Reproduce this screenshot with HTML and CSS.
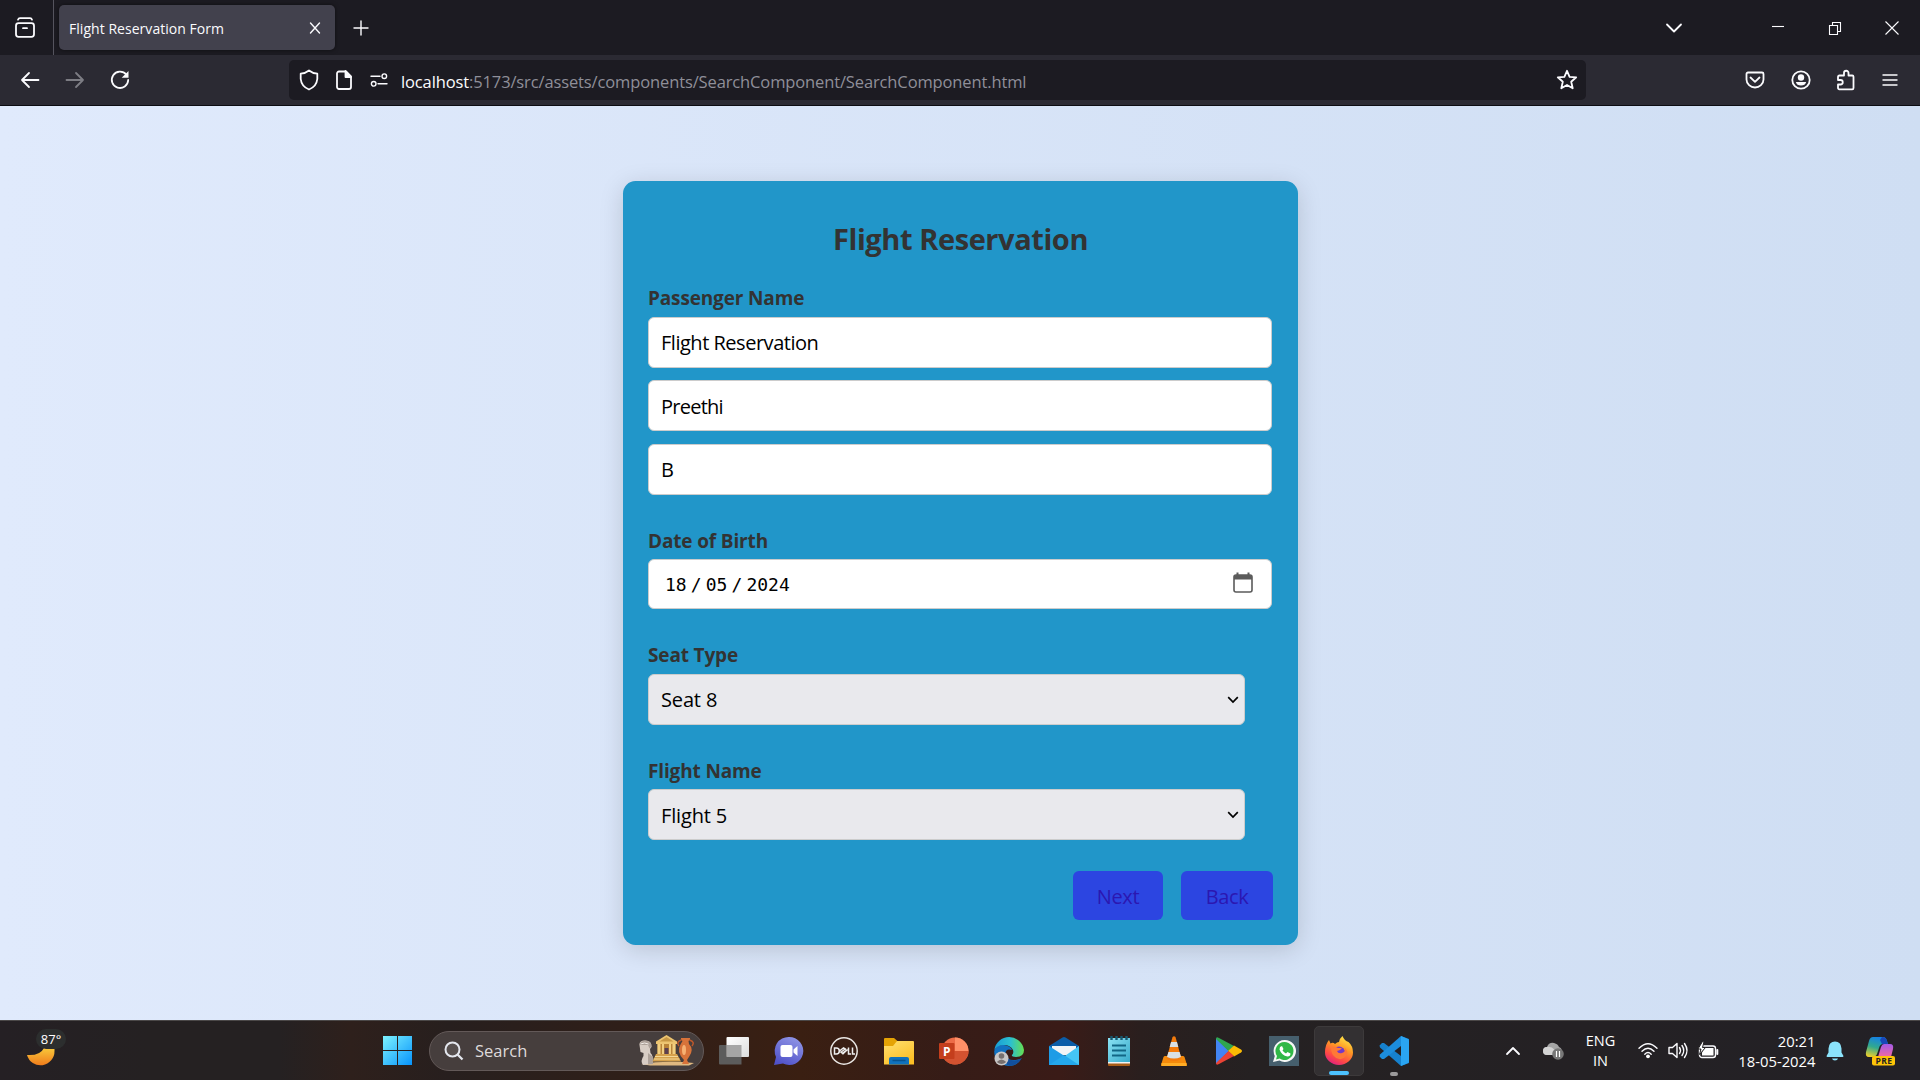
FILE: index.html
```html
<!DOCTYPE html>
<html lang="en">
<head>
<meta charset="utf-8">
<title>Flight Reservation Form</title>
<link rel="stylesheet" href="styles.css">
</head>
<body>
<header class="tabbar">
  <div class="tab-view"><svg width="22" height="22" viewBox="0 0 22 22" class="line"><rect x="2" y="6.200" width="18" height="13.600" rx="2.500"/><path d="M4 2.700Q4.500 1.200 6 1.200H16Q17.500 1.200 18 2.700M9 11.200h4"/></svg></div>
  <div class="tab"><span class="tab-title">Flight Reservation Form</span><svg width="12" height="12" viewBox="0 0 12 12" class="line thin"><path d="M1.500 1l9 10M10.500 1l-9 10"/></svg></div>
  <svg class="line thin plus" width="16" height="16" viewBox="0 0 16 16"><path d="M8 1v14M1 8h14"/></svg>
  <div class="window-controls">
    <svg class="line" width="18" height="12" viewBox="0 0 18 12"><path d="M2 2.500l7 7 7-7"/></svg>
    <svg class="line hair minimise" width="14" height="14" viewBox="0 0 14 14"><path d="M1 5.500h12"/></svg>
    <svg class="line hair restore" width="14" height="14" viewBox="0 0 14 14"><path d="M1.500 4.500h8v9h-8zM4.500 4.500v-3h8v9h-3"/></svg>
    <svg class="line hair close" width="14" height="14" viewBox="0 0 14 14"><path d="M.5 .5l13 13M13.500 .5l-13 13"/></svg>
  </div>
</header>
<nav class="toolbar">
  <div class="history">
    <svg class="line" width="20" height="18" viewBox="0 0 20 18"><path d="M18.500 9H2M9 2L2 9l7 7"/></svg>
    <svg class="line dim" width="20" height="18" viewBox="0 0 20 18"><path d="M1.500 9H18M11 2l7 7-7 7"/></svg>
    <svg class="line" width="20" height="20" viewBox="0 0 20 20"><path d="M16.300 4.500A8.200 8.200 0 1 0 18.200 10"/><path d="M18.500 1v6.800h-6.800z" fill="#fbfbfe" stroke="none"/></svg>
  </div>
  <div class="address">
    <svg class="line" width="20" height="22" viewBox="0 0 20 22"><path d="M10 1.500Q13.500 4.300 18.300 4.700V10Q17.500 17.500 10 20.500 2.500 17.500 1.700 10V4.700Q6.500 4.300 10 1.500z"/></svg>
    <svg class="line page" width="16" height="20" viewBox="0 0 16 20"><path d="M3 1.500h7l5 5v10.500a2 2 0 0 1-2 2H3a2 2 0 0 1-2-2V3.500a2 2 0 0 1 2-2z"/><path d="M9.500 1v6H15z" fill="#fbfbfe"/></svg>
    <svg class="line thin" width="18" height="14" viewBox="0 0 18 14"><path d="M1 3.200h9M8 10.800h9"/><circle cx="14.300" cy="3.200" r="2.300"/><circle cx="3.700" cy="10.800" r="2.300"/></svg>
    <span class="url"><b>localhost</b>:5173/src/assets/components/SearchComponent/SearchComponent.html</span>
    <svg class="line star" width="22" height="22" viewBox="0 0 22 22"><path d="M11 1.800l2.600 6 6.600.5-5 4.400 1.500 6.600L11 15.900l-5.700 3.400 1.500-6.600-5-4.400 6.600-.5z"/></svg>
  </div>
  <div class="actions">
    <svg class="line" width="20" height="18" viewBox="0 0 20 18"><path d="M3 1.500h14a1.500 1.500 0 0 1 1.500 1.500v5.500c0 4.500-4 8-8.500 8s-8.500-3.500-8.500-8V3A1.500 1.500 0 0 1 3 1.500zM5.500 6.500L10 10.800l4.500-4.300"/></svg>
    <svg class="line" width="20" height="20" viewBox="0 0 20 20"><circle cx="10" cy="10" r="8.700"/><circle cx="10" cy="7.500" r="3.200" fill="#fbfbfe" stroke="none"/><path d="M4.800 12h10.400Q14.200 15.500 10 15.500T4.800 12z" fill="#fbfbfe" stroke="none"/></svg>
    <svg class="line" width="20" height="22" viewBox="0 0 20 22"><path d="M3.500 6.500H8V4a2 2 0 0 1 4.500 0V6.500h3.700a1.300 1.300 0 0 1 1.300 1.300V19a1.300 1.300 0 0 1-1.300 1.300H3.300A1.300 1.300 0 0 1 2 19V15.500H4.500a2.200 2.200 0 0 0 0-4.500H2V8Q2 6.500 3.500 6.500z"/></svg>
    <svg class="line thin" width="16" height="14" viewBox="0 0 16 14"><path d="M1 2h14M1 7h14M1 12h14"/></svg>
  </div>
</nav>
<main class="page-area">
  <form class="card">
    <h2 class="title">Flight Reservation</h2>
    <label class="label">Passenger Name</label>
    <div class="field"><span class="value">Flight Reservation</span></div>
    <div class="field second"><span class="value tight">Preethi</span></div>
    <div class="field third"><span class="value">B</span></div>
    <label class="label">Date of Birth</label>
    <div class="field date"><span class="date-text"><i>18</i><s>/</s><i>05</i><s>/</s><i>2024</i></span>
      <svg class="calendar" width="20" height="21" viewBox="0 0 20 21"><path d="M3 3h14a2 2 0 0 1 2 2v13a2 2 0 0 1-2 2H3a2 2 0 0 1-2-2V5a2 2 0 0 1 2-2z" fill="none" stroke="#5b5b5b" stroke-width="1.600"/><path d="M1 7V5a2 2 0 0 1 2-2h.5V.5h2V3h9V.5h2V3h.5a2 2 0 0 1 2 2v2.500H1z" fill="#5b5b5b"/></svg></div>
    <label class="label">Seat Type</label>
    <div class="field select"><span>Seat 8</span><svg width="12" height="8" viewBox="0 0 12 8"><path d="M1.200 1.200L6 6l4.800-4.800"/></svg></div>
    <label class="label">Flight Name</label>
    <div class="field select flight"><span>Flight 5</span><svg width="12" height="8" viewBox="0 0 12 8"><path d="M1.200 1.200L6 6l4.800-4.800"/></svg></div>
    <div class="buttons"><div class="btn next">Next</div><div class="btn back">Back</div></div>
  </form>
</main>
<footer class="taskbar">
  <div class="weather">
    <svg width="28" height="20" viewBox="0 0 28 20"><defs><linearGradient id="moon" x2="0" y2="1"><stop stop-color="#f8c83a"/><stop offset="1" stop-color="#f07c1c"/></linearGradient></defs><path d="M0 7Q13 8 17 0H27.500V3A14 14 0 0 1 0 7z" fill="url(#moon)"/></svg>
    <span class="temp">87°</span>
  </div>
  <svg class="start" width="29" height="29" viewBox="0 0 29 29"><defs><linearGradient id="win" x2="1" y2="1"><stop stop-color="#7df3ff"/><stop offset="1" stop-color="#0793fb"/></linearGradient></defs><path d="M0 0h14v14H0zM15 0h14v14H15zM0 15h14v14H0zM15 15h14v14H15z" fill="url(#win)"/></svg>
  <div class="search">
    <svg class="lens" width="20" height="20" viewBox="0 0 20 20"><circle cx="8.500" cy="8.500" r="7" fill="#ffffff18" stroke="#e4e7ee" stroke-width="2"/><path d="M13.500 13.500l5 5" stroke="#e4e7ee" stroke-width="2.300"/></svg>
    <span class="search-text">Search</span>
    <svg class="museum" width="56" height="31" viewBox="0 0 56 31"><path d="M3 29q25-4 53-1l-5 2.500H12z" fill="#e0b981"/><path d="M1.500 10Q1 5.500 7 5.500q7 0 6.500 6.500l-1.500 2 .5 4q3 2 2.500 11l-10 1q-3-4 .5-9v-3l-3-1z" fill="#d8cdc5"/><path d="M1.500 10q1-4.500 6-4.500 6 0 6 6l-2 2-1.500-3.500zM10 18l5 4v7l-5 .5z" fill="#aea29a"/><path d="M2.500 9q4-2 8 0" fill="none" stroke="#f1ebe6"/><path d="M18 6.500L28.500 0 39 6.500V9H18z" fill="#ecc471"/><path d="M21.500 6.500l7-4.500 7 4.500z" fill="#c79745"/><path d="M19.500 9h18v10h-18z" fill="#b98339"/><path d="M19.500 9h3v10h-3zM24 9h2v10h-2zM31 9h2v10h-2zM34.500 9h3v10h-3z" fill="#f1cf80"/><path d="M26.500 13h4v6h-4z" fill="#5b4050"/><path d="M18 19h21l4 7.500H14.500z" fill="#d5a14c"/><path d="M17 21.500h23M15.500 24h26" stroke="#f3d896"/><path d="M43 3h9v1.500L50.500 6 51 9q5 5 .5 12l-2.500 4 2 4h-7l2-4q-8-8-3.500-15.500L44.500 6 43 4.500z" fill="#d8733a"/><path d="M43.500 5q-6 2-2.500 6M51.500 5q6 2 2.500 6" fill="none" stroke="#c0592b" stroke-width="1.500"/><ellipse cx="46" cy="15" rx="2" ry="5" fill="#f7b173"/></svg>
  </div>
  <div class="apps">
    <div class="app"><svg width="30" height="30" viewBox="0 0 30 30"><defs><linearGradient id="tv" x2="1" y2="1"><stop stop-color="#fff"/><stop offset="1" stop-color="#ddd"/></linearGradient></defs><rect x="7.500" y="1" width="22.500" height="20" rx="1" fill="url(#tv)"/><path d="M1 9h6.500v12H22.500v7.500H1Q0 28.500 0 27.500V10q0-1 1-1z" fill="#5c5c5c"/><path d="M7.500 9h15v12h-15z" fill="#a5a5a5"/></svg></div>
    <div class="app"><svg width="30" height="30" viewBox="0 0 30 30"><defs><linearGradient id="chat" x1=".8" x2=".3" y2="1"><stop stop-color="#9196e6"/><stop offset="1" stop-color="#5052c9"/></linearGradient></defs><path d="M15 1a14 14 0 1 1-6 26.500L0 29l2-8A14 14 0 0 1 15 1z" fill="url(#chat)"/><rect x="6.500" y="9" width="12" height="12" rx="2" fill="#fff"/><path d="M19.500 13.500L23.500 10v10l-4-3.500z" fill="#fff"/></svg></div>
    <div class="app"><svg width="30" height="30" viewBox="0 0 30 30"><circle cx="15" cy="15" r="13.200" fill="none" stroke="#e9e6e3" stroke-width="1.500"/><g fill="none" stroke="#eee" stroke-width="1.500"><path d="M5.500 12h1.800q3 0 3 3t-3 3H5.500zM10.500 15l4-3 2.500 1.500M11.500 16.500l4-3M13 17.800l4-3.300M10.500 15l3.500 2.800 4.500-4.300M19.500 11.500V18h2.500M23.500 11.500V18h2.500"/></g></svg></div>
    <div class="app"><svg width="30" height="30" viewBox="0 0 30 30"><defs><linearGradient id="fold" x2=".6" y2="1"><stop stop-color="#ffe071"/><stop offset="1" stop-color="#fcbf26"/></linearGradient></defs><path d="M1 2h9l4 3.500h15V12H0V3q0-1 1-1z" fill="#e5a305"/><path d="M13 5h16q1 0 1 1v22.500H0V10h9z" fill="url(#fold)"/><path d="M5 28.500V23q0-2 2-2h16q2 0 2 2v5.500z" fill="#1072bd"/><path d="M8.500 24.500h13" stroke="#07538f" stroke-width="1.500"/></svg></div>
    <div class="app"><svg width="30" height="30" viewBox="0 0 30 30"><circle cx="16" cy="15" r="13.500" fill="#ed6c47"/><path d="M16 1.500A13.500 13.500 0 0 1 29.500 15H16z" fill="#ff9068"/><path d="M16 15h13.500a13.500 13.500 0 0 1-27 0z" fill="#d35230"/><rect y="7" width="15.500" height="16" rx="1" fill="#c43e1c"/><text x="4" y="19.500" class="glyph" font-size="12" fill="#fff">P</text></svg></div>
    <div class="app"><svg width="30" height="30" viewBox="0 0 30 30"><defs><linearGradient id="edge" x2="1"><stop stop-color="#179bd6"/><stop offset=".55" stop-color="#2cc0d0"/><stop offset="1" stop-color="#66df50"/></linearGradient></defs><path d="M.2 15Q2 8 10 9q7 1 8 5-6-2-6.500 3 0 8 10 7l6-1.500Q23 30 15 30 0 29 .2 15z" fill="#1171c1"/><path d="M12 15q-1 7 5 9 6 1.500 11-2-5 8-12 8-9-3-4-15z" fill="#124f9c"/><path d="M.3 14A15 15 0 0 1 30 14q0 7-8 7-5 0-4-2 2-2 1-5-3-5.500-10-5Q3 9.500 .3 14z" fill="url(#edge)"/><circle cx="7.500" cy="22.500" r="7" fill="#c9c7c7"/><circle cx="7.500" cy="20" r="2.800" fill="#77706f"/><path d="M2.800 26q4.700-5 9.400 0-4.700 4-9.400 0z" fill="#77706f"/></svg></div>
    <div class="app"><svg width="30" height="30" viewBox="0 0 30 30"><path d="M0 10L13.500 1.500q1.500-1 3 0L30 10v8H0z" fill="#0b5da8"/><path d="M3 10h24v9H3z" fill="#f2f4f6"/><path d="M0 10l17 11-14 8H0z" fill="#1e9ce6"/><path d="M30 10v19H3z" fill="#45c5f5"/><path d="M15 19l15 10H0z" fill="#24a8ec"/></svg></div>
    <div class="app"><svg width="30" height="30" viewBox="0 0 30 30"><defs><linearGradient id="note" x2="1" y2="1"><stop stop-color="#8ae2f4"/><stop offset="1" stop-color="#38aaca"/></linearGradient></defs><path d="M4 25h22v4q0 1-1 1H5q-1 0-1-1z" fill="#a85d18"/><path d="M4 25h22v2.500H4z" fill="#f2f2f2"/><path d="M4 2h22v24H4z" fill="url(#note)"/><path d="M8 9.500h14M8 14.500h14M8 19.500h14" stroke="#126685" stroke-width="1.800"/><path d="M7.500 0v4M12.500 0v4M17.500 0v4M22.500 0v4" stroke="#17596f" stroke-width="2.400"/></svg></div>
    <div class="app"><svg width="30" height="30" viewBox="0 0 30 30"><path d="M6 20h18q1 0 1.500 1L28 29q0 1-1 1H3q-1 0-1-1l2.500-8q.5-1 1.500-1z" fill="#f58a0b"/><path d="M2.500 27h25v3h-25z" fill="#ffac25"/><path d="M13.500 1q1.500-1.500 3 0L22.500 23q-7.500 4-15 0z" fill="#f47b0c"/><path d="M12 6h6l1.300 5h-8.600zM9.400 16h11.200l1.400 5q-7 3-14 0z" fill="#d9e0e5"/></svg></div>
    <div class="app"><svg width="30" height="30" viewBox="0 0 30 30"><path d="M2 2v26L15 15z" fill="#4285f4"/><path d="M2 3q0-3 3-1l15 8-5.500 5z" fill="#2fa650"/><path d="M20 9.500l7 4q2 1.500 0 3l-7 4-6-5.500z" fill="#fbbc04"/><path d="M2 27q0 3 3 1l15-8-5.500-5z" fill="#ea4335"/></svg></div>
    <div class="app"><svg width="30" height="30" viewBox="0 0 30 30"><path d="M0 0h30v30H0z" fill="#465f6d"/><path d="M15.500 4a11 11 0 1 1-5 20.500L4 26l1.800-6A11 11 0 0 1 15.500 4z" fill="#f5f7f5"/><path d="M15.500 6a9 9 0 1 1-4.800 16.600L7 23.500l1-3.500A9 9 0 0 1 15.500 6z" fill="#30b846"/><path d="M11 11l2-1 1.500 3-1 1.500q1.500 2 3.500 3l1.500-1.500 3 1.500q0 3-3 3-6-1-8-7z" fill="#fff"/></svg></div>
    <div class="app active"><svg width="30" height="30" viewBox="0 0 30 30"><defs><linearGradient id="fox" x1=".8" x2=".3" y2="1"><stop stop-color="#fff04c"/><stop offset=".4" stop-color="#ff9a24"/><stop offset=".75" stop-color="#ff4a45"/><stop offset="1" stop-color="#e02080"/></linearGradient></defs><path d="M5 4l1.500 3.500Q9 6 11 8q2-2 4-2 0-3 3.500-6 2 5 6 6 4.500 4 4.500 10.500a14 12.500 0 0 1-28 0Q1 8.500 5 4z" fill="url(#fox)"/><circle cx="15" cy="16.500" r="6" fill="#7438c8"/><path d="M7 11q4-1 7 1l4 0q-2 3-5 3 1 3 5 2 4-1 3-5 4 4 1 8-4 5-10 2-5-3-5-11z" fill="#ff7936"/></svg><em class="indicator"></em></div>
    <div class="app"><svg width="30" height="30" viewBox="0 0 30 30"><path d="M22 0l8 3v24l-8 3L1 11.500l-.5-2L3 7l2 0 17 13V9z" fill="#1681cd"/><path d="M22 10L5 23l-2 0-2.500-2.500.5-2L22 0z" fill="#1c8ddc"/><path d="M22 0l7 3q1 0 1 2v20q0 2-1 2l-7 3z" fill="#2aa5f2"/></svg><em class="indicator small"></em></div>
  </div>
  <div class="tray">
    <svg class="line" width="16" height="10" viewBox="0 0 16 10"><path d="M2 8l6-6 6 6"/></svg>
    <svg class="cloud" width="21" height="18" viewBox="0 0 21 18"><path d="M4 13a4 4 0 0 1 0-8Q6 0 11 1q4 1 5 4 3 1 3 5l-3 3z" fill="#a5a5a5"/><path d="M4 13a4 4 0 0 1 0-8q4-1 8 3l2 5z" fill="#d3d3d3"/><circle cx="15" cy="12" r="5.800" fill="#777"/><path d="M13.500 9v6M16.500 9v6" stroke="#fff" stroke-width="1.200"/></svg>
    <div class="lang"><span>ENG</span><span>IN</span></div>
    <svg class="line thin" width="20" height="17" viewBox="0 0 20 17"><path d="M1 6.200q9-9 18 0M4 9.300q6-6 12 0M6.800 12.200q3.200-3.200 6.400 0"/><circle cx="10" cy="14.300" r="1.900" fill="#fff" stroke="none"/></svg>
    <svg class="line thin" width="20" height="17" viewBox="0 0 20 17"><path d="M1 5.500h3.500L9 1.500v14l-4.500-4H1zM11.500 5.500q2 3 0 6M14 3.500q3.500 5 0 10M16.500 1.500q5 7 0 14"/></svg>
    <svg class="line thin" width="21" height="17" viewBox="0 0 21 17"><rect x="1.500" y="4" width="16" height="11.500" rx="2.500"/><path d="M6.500 6h9v7.500H4v-3z" fill="#fff" stroke="none"/><path d="M19.300 8v4" stroke-width="2"/><path d="M4.500 -.5L0 7h3L1.500 12.500 7.500 5.500H4.500L6 -.5z" fill="#fff" stroke="#222022" stroke-width="1"/></svg>
    <div class="clock"><span>20:21</span><span>18-05-2024</span></div>
    <svg class="bell" width="18" height="20" viewBox="0 0 18 20"><path d="M9 .5q6 0 6.500 7v4l2 3.500q0 1-1 1H1.500q-1 0-1-1l2-3.500v-4Q3 .5 9 .5zM6 17.500h6q-.5 2-3 2t-3-2z" fill="#8be3fb"/></svg>
    <svg class="copilot" width="30" height="30" viewBox="0 0 30 30"><defs><linearGradient id="cpa" x1=".5" x2=".2" y2="1"><stop stop-color="#1582e5"/><stop offset=".5" stop-color="#31a98e"/><stop offset="1" stop-color="#f0d02a"/></linearGradient><linearGradient id="cpb" x1=".5" x2=".5" y2="1"><stop stop-color="#a35ae8"/><stop offset="1" stop-color="#f16aa0"/></linearGradient></defs><path d="M8 1h10q3 0 4 4l1 3h-5q-3 0-4 4l-2 6q-1 3-5 3H4q-4 0-3-5l3-11Q5 1 8 1z" fill="url(#cpa)"/><path d="M17 1q4 0 5 4l1 3h-6l-2-4z" fill="#1947b8"/><path d="M19 8h6q4 0 3 5l-2 8H13l3-10q1-3 3-3z" fill="url(#cpb)"/><rect x="7" y="20" width="23" height="9.500" rx="2" fill="#fdc408"/><text x="10.500" y="27.700" class="glyph" font-size="8.500" textLength="16.500" fill="#222">PRE</text></svg>
  </div>
</footer>
</body>
</html>
```
FILE: styles.css
```css
* { box-sizing: border-box; }
body { margin: 0; width: 1920px; height: 1080px; overflow: hidden; display: flex; flex-direction: column; font-family: "Open Sans", "Noto Sans", sans-serif; }
svg { display: block; flex: none; overflow: visible; }
span { white-space: nowrap; }
.line { fill: none; stroke: #fbfbfe; stroke-width: 1.8; stroke-linecap: round; stroke-linejoin: round; }
.thin { stroke-width: 1.4; }
.hair { stroke-width: 1.1; stroke-linecap: butt; stroke-linejoin: miter; }
.dim { opacity: .4; }
.glyph { font-family: "Open Sans", sans-serif; font-weight: 700; }

.tabbar { height: 55px; background: #1c1b22; display: flex; align-items: center; color: #fbfbfe; }
.tab-view { width: 54px; height: 55px; border-right: 1px solid #55545e; display: flex; align-items: center; padding: 1px 0 0 14px; }
.tab { width: 276px; height: 45px; margin-left: 5px; border-radius: 5px; background: #42414d; box-shadow: 0 0 4px #0008; display: flex; align-items: center; justify-content: space-between; padding: 0 14px 0 10px; }
.tab-title { font-size: 14px; padding-top: 2px; letter-spacing: .04px; }
.plus { margin: 1px 0 0 18px; }
.window-controls { margin-left: auto; display: flex; align-items: center; padding-right: 21px; }
.minimise { margin-left: 88px; }
.restore { margin-left: 43px; }
.close { margin-left: 43px; }

.toolbar { height: 51px; background: #2b2a33; border-bottom: 1px solid #0c0c12; display: flex; align-items: center; }
.history { width: 289px; padding-left: 20px; display: flex; align-items: center; gap: 25px; }
.address { width: 1297px; height: 40px; border-radius: 5px; background: #1c1b22; display: flex; align-items: center; padding: 0 8px 0 10px; }
.address .page { margin: 0 18px 0 17px; }
.url { margin-left: 13px; padding-top: 2px; font-size: 16.500px; letter-spacing: -.125px; color: #8f8f99; }
.url b { font-weight: 400; color: #fbfbfe; }
.star { margin-left: auto; }
.actions { flex: 1; display: flex; align-items: center; justify-content: space-between; padding: 0 22px 0 159px; }

.page-area { height: 914px; padding: 75px 0 0 623px; background: linear-gradient(to right, #e0eafc, #cfdef3); }
.card { width: 675px; height: 764px; padding: 38px 25px 25px; border-radius: 12.500px; background: #2196c9; box-shadow: 0 5px 25px rgba(0, 0, 0, .15); }
.title { margin: 0 0 26px; text-align: center; font-size: 29px; line-height: 40px; font-weight: 700; letter-spacing: -.42px; color: #333; }
.label { display: block; height: 26px; font-size: 19px; line-height: 26px; font-weight: 700; letter-spacing: -.15px; color: #333; margin-bottom: 6px; }
.field { width: 624px; height: 51px; border: 1px solid #ccc; border-radius: 6px; background: #fff; display: flex; align-items: center; justify-content: space-between; padding: 0 12px; font-size: 20px; letter-spacing: -.15px; color: #000; }
.value { letter-spacing: -.48px; }
.tight { letter-spacing: -.75px; padding-top: 1px; }
.second { margin-top: 12px; }
.third { margin: 13px 0 33px; }
.date { height: 50px; margin: -1px 0 33px; padding: 0 18px 0 16px; }
.date-text { display: flex; font: 18px "DejaVu Sans Mono", monospace; letter-spacing: 0; }
.date-text i { font-style: normal; }
.date-text s { text-decoration: none; width: 19px; text-align: center; }
.calendar { margin-bottom: 3px; }
.select { width: 597px; background: #e9e9ed; margin-bottom: 33px; padding-right: 5px; }
.select path { fill: none; stroke: #000; stroke-width: 1.700; }
.flight { margin: -1px 0 31px; }
.flight span { padding-top: 1px; }
.buttons { display: flex; justify-content: flex-end; gap: 18px; }
.btn { height: 49px; padding-top: 1px; border-radius: 6px; background: #2c45e1; color: #2b17b1; font-size: 20px; letter-spacing: -.35px; display: flex; align-items: center; justify-content: center; }
.next { width: 90px; }
.back { width: 92px; }

.taskbar { height: 60px; border-top: 1px solid #4b4848; display: flex; align-items: center; color: #fff; background: linear-gradient(to right, #252024, #252122 150px, #252122 280px, #2e201c 350px, #271f1e 450px, #321f17 680px, #3a1f12 800px, #361c17 950px, #3a1b17 1060px, #2a1f1e 1140px, #252122 1250px, #232126); }
.weather { width: 383px; height: 59px; padding: 27px 0 0 27px; position: relative; }
.temp { position: absolute; left: 36px; top: 8px; width: 30px; height: 20px; border-radius: 10px; background: #2c2e2e; font-size: 13px; line-height: 20px; text-align: center; }
.search { width: 275px; height: 40px; margin: 0 2.500px 0 17px; border: 1px solid #635958; border-radius: 20px; background: #463e3d; display: flex; align-items: center; padding: 0 9px 0 14px; }
.search-text { margin-left: 11px; font-size: 16.500px; color: #dedada; }
.museum { margin-left: auto; }
.apps { display: flex; }
.app { width: 55px; height: 50px; display: flex; align-items: center; justify-content: center; position: relative; }
.active { width: 50px; margin: 0 2.500px; background: #333032; border: 1px solid #3d3a3b; border-radius: 5px; }
.indicator { position: absolute; bottom: 0; left: 14px; width: 20px; height: 4px; border-radius: 2px; background: #4cc2ff; }
.small { left: 23px; width: 8px; background: #9c9a9b; }
.tray { flex: 1; display: flex; align-items: center; padding-left: 83px; }
.cloud { margin-left: 22px; }
.lang { width: 74px; display: flex; flex-direction: column; align-items: center; font-size: 14.500px; line-height: 20px; }
.tray .line + .line { margin-left: 10px; }
.clock { width: 97px; display: flex; flex-direction: column; align-items: flex-end; font-size: 14.800px; line-height: 20px; }
.bell { margin-left: 10px; }
.copilot { margin-left: 21px; }
```
